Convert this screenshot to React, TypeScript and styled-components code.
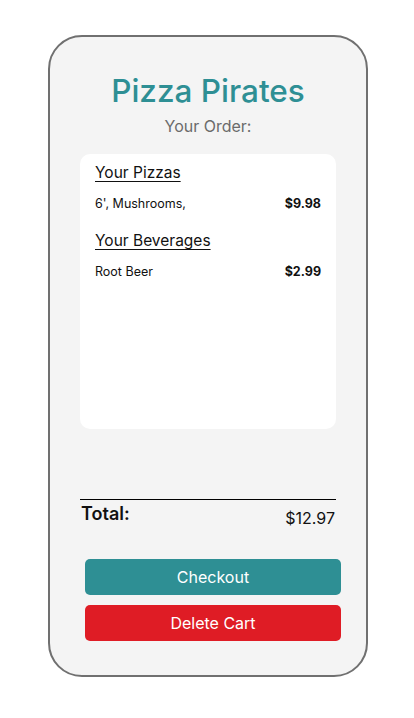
import React from "react";
import styled, { createGlobalStyle } from "styled-components";

const Global = createGlobalStyle`
  html, body { margin: 0; padding: 0; background: #ffffff; }
  body { font-family: Inter, "Noto Sans", sans-serif; }
  * { box-sizing: border-box; }
`;

const Page = styled.div`
  width: 414px;
  height: 718px;
  padding-top: 35px;
  display: flex;
  justify-content: center;
  padding-left: 2px;
`;

const Phone = styled.div`
  width: 320px;
  height: 642px;
  border: 2px solid #707070;
  border-radius: 34px;
  background: #f4f4f4;
  display: flex;
  flex-direction: column;
  align-items: center;
  padding: 0 30px;
`;

const Title = styled.h1`
  margin: 34px 0 0;
  font-size: 31.5px;
  line-height: 40px;
  font-weight: 500;
  color: #2e8f94;
  text-align: center;
`;

const Subtitle = styled.div`
  margin-top: 5px;
  font-size: 16px;
  line-height: 20px;
  color: #6b6b6b;
`;

const Card = styled.div`
  margin-top: 18px;
  width: 256px;
  height: 275px;
  background: #ffffff;
  border-radius: 10px;
  padding: 9px 15px;
  display: flex;
  flex-direction: column;
`;

const SectionTitle = styled.div<{ $gap?: number }>`
  margin-top: ${(p) => p.$gap ?? 0}px;
  font-size: 15.5px;
  line-height: 20px;
  color: #111;
  text-decoration: underline;
  text-underline-offset: 3px;
  text-decoration-thickness: 1px;
`;

const Item = styled.div`
  margin-top: 13px;
  display: flex;
  justify-content: space-between;
  font-size: 12.5px;
  line-height: 16px;
  color: #111;
`;

const Price = styled.span`
  font-weight: 700;
`;

const TotalRow = styled.div`
  margin-top: 70px;
  width: 256px;
  border-top: 1px solid #000;
  display: flex;
  justify-content: space-between;
  padding: 3px 1px 0 1px;
`;

const TotalLabel = styled.span`
  font-size: 18px;
  line-height: 22px;
  font-weight: 600;
  color: #111;
`;

const TotalValue = styled.span`
  margin-top: 5px;
  font-size: 16px;
  line-height: 20px;
  color: #111;
`;

const Button = styled.button<{ $bg: string }>`
  width: 256px;
  height: 36px;
  margin-left: 10px;
  border: none;
  border-radius: 5px;
  background: ${(p) => p.$bg};
  color: #ffffff;
  font-family: Inter, "Noto Sans", sans-serif;
  font-size: 16px;
  display: flex;
  align-items: center;
  justify-content: center;
  padding: 0;
`;

const Buttons = styled.div`
  margin-top: 31px;
  display: flex;
  flex-direction: column;
  gap: 10px;
`;

export default function App() {
  return (
    <>
      <Global />
      <Page>
        <Phone>
          <Title>Pizza Pirates</Title>
          <Subtitle>Your Order:</Subtitle>
          <Card>
            <SectionTitle>Your Pizzas</SectionTitle>
            <Item>
              <span>6', Mushrooms,</span>
              <Price>$9.98</Price>
            </Item>
            <SectionTitle $gap={19}>Your Beverages</SectionTitle>
            <Item>
              <span>Root Beer</span>
              <Price>$2.99</Price>
            </Item>
          </Card>
          <TotalRow>
            <TotalLabel>Total:</TotalLabel>
            <TotalValue>$12.97</TotalValue>
          </TotalRow>
          <Buttons>
            <Button $bg="#2e8f94">Checkout</Button>
            <Button $bg="#df1c25">Delete Cart</Button>
          </Buttons>
        </Phone>
      </Page>
    </>
  );
}
